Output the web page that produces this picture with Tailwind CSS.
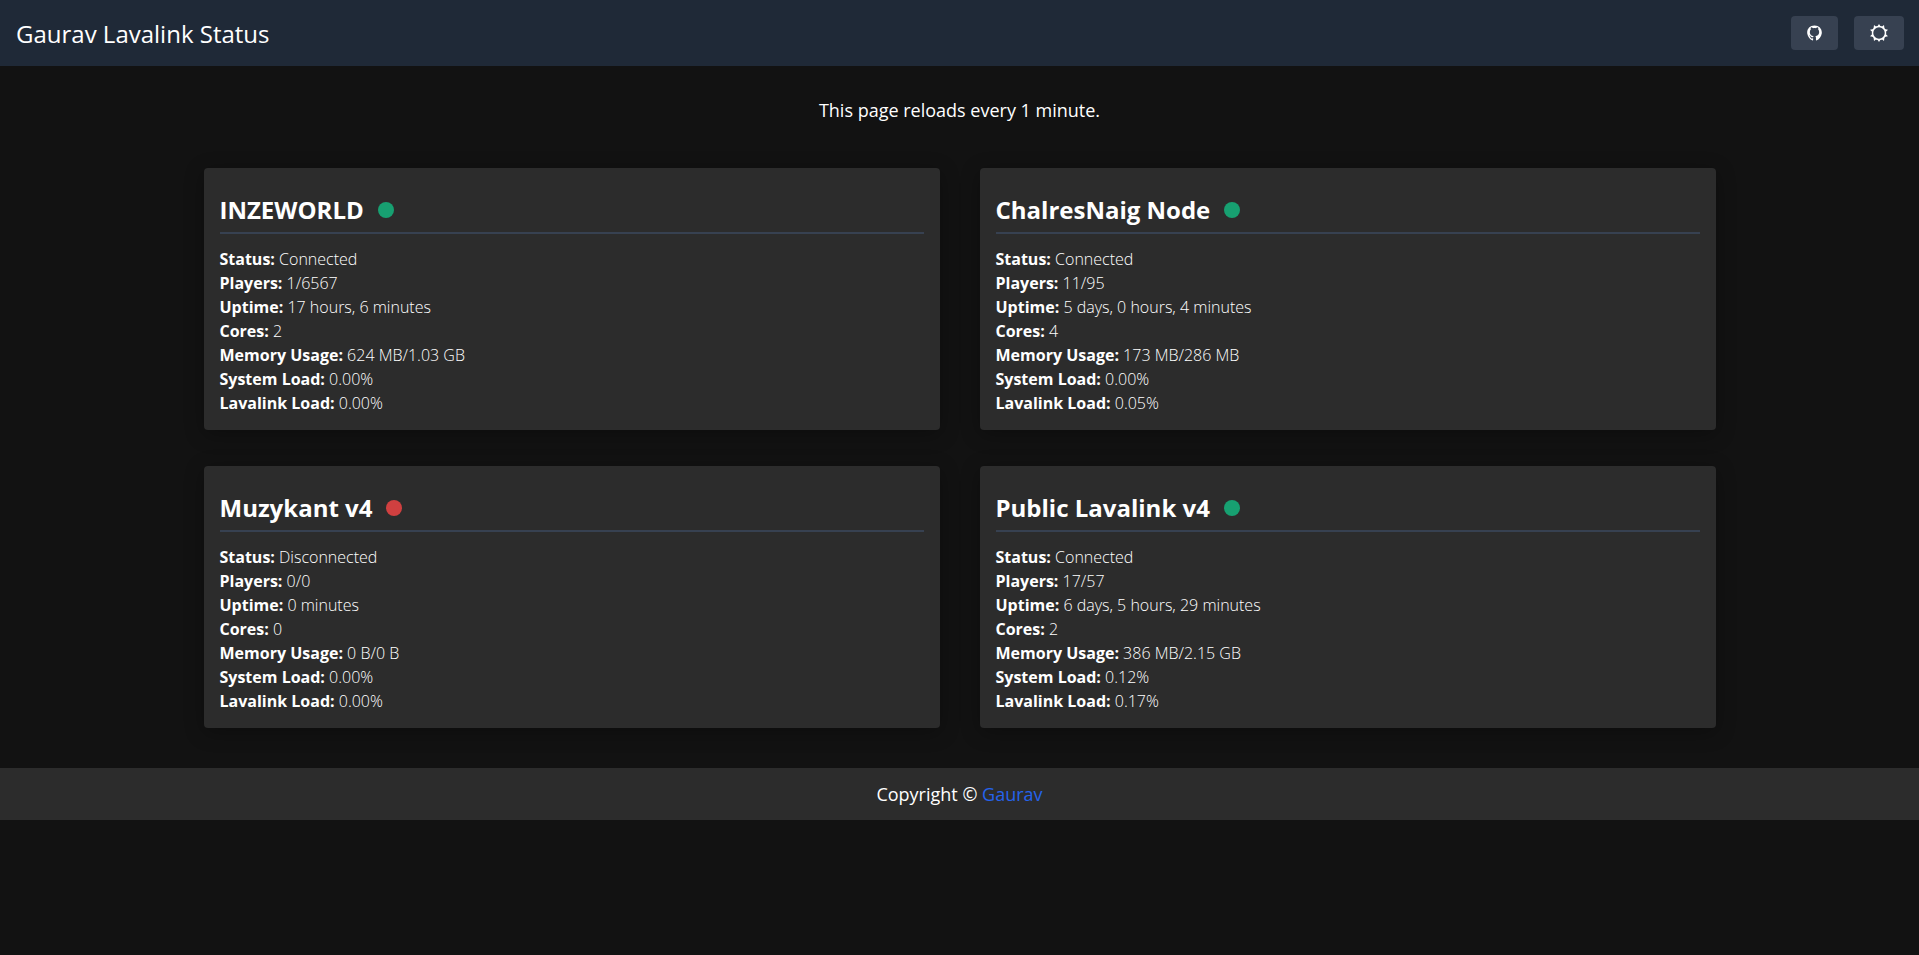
<!DOCTYPE html>
<html lang="en">
<head>
<meta charset="utf-8">
<meta name="viewport" content="width=device-width, initial-scale=1">
<title>Gaurav Lavalink Status</title>
<script src="https://cdn.jsdelivr.net/npm/@tailwindcss/browser@4"></script>
</head>
<body class="min-h-screen bg-[#121212] font-['Open_Sans','Noto_Sans',sans-serif] text-white">
<header class="flex items-center justify-between bg-[#1f2937] py-4 pl-4 pr-[15px]">
  <h1 class="pt-0.5 text-2xl font-medium">Gaurav Lavalink Status</h1>
  <div class="flex gap-4">
    <button type="button" aria-label="GitHub" class="flex h-[34px] items-center rounded bg-[#374151] px-4">
      <svg class="h-4 w-[15px]" viewBox="0 0 496 512" preserveAspectRatio="none" fill="currentColor" aria-hidden="true"><path d="M186 492C92 462 24 374 8 270C-10 140 84 14 248 14s258 126 240 256c-16 104-84 192-178 222c-10 3-14-3-14-10v-76c0-28-8-46-20-56c66-8 126-34 126-130c0-32-12-58-32-78c4-12 10-36-4-66c-30-8-72 28-72 28c-30-8-62-8-92 0c0 0-42-36-72-28c-14 30-8 54-4 66c-20 20-32 46-32 78c0 96 60 122 126 130c-10 8-16 20-18 38c-20 10-58 10-80-28c-10-18-26-22-36-22c-18 0-8 10 0 16c12 8 22 28 28 42c8 20 40 40 88 30v56c0 7-6 13-16 10z"/></svg>
    </button>
    <button type="button" aria-label="Toggle theme" class="flex h-[34px] items-center rounded bg-[#374151] px-4">
      <svg class="size-[18px]" viewBox="0 0 18 18" aria-hidden="true"><circle cx="9" cy="9" r="6.500" fill="none" stroke="currentColor" stroke-width="1.500"/><path fill="currentColor" d="M7 3 9 0l2 3zM7 15l2 3 2-3zM11.500 3l2.500-2 .5 4zM6.500 3 4 1l-.5 4zM11.500 15l2.500 2 .5-4zM6.500 15 4 17l-.5-4zM14.500 5l3.500.8-2.500 2.400zM3.500 5 0 5.800l2.500 2.400zM14.500 13l3.500-.8-2.500-2.400zM3.500 13 0 12.200l2.500-2.400z"/></svg>
    </button>
  </div>
</header>
<main>
  <p class="pt-[30px] text-center text-lg font-medium">This page reloads every 1 minute.</p>
  <div id="nodes" class="mx-auto mt-11 grid max-w-[1536px] grid-cols-1 gap-x-10 gap-y-9 px-3 lg:grid-cols-2"></div>
</main>
<footer class="mt-10 bg-[#2c2c2c] py-3 text-center text-lg font-medium">Copyright © <a href="#" class="text-[#2563eb]">Gaurav</a></footer>
<script>
const labels = ["Status", "Players", "Uptime", "Cores", "Memory Usage", "System Load", "Lavalink Load"];
const nodes = [
  ["INZEWORLD", "Connected", "1/6567", "17 hours, 6 minutes", "2", "624 MB/1.03 GB", "0.00%", "0.00%"],
  ["ChalresNaig Node", "Connected", "11/95", "5 days, 0 hours, 4 minutes", "4", "173 MB/286 MB", "0.00%", "0.05%"],
  ["Muzykant v4", "Disconnected", "0/0", "0 minutes", "0", "0 B/0 B", "0.00%", "0.00%"],
  ["Public Lavalink v4", "Connected", "17/57", "6 days, 5 hours, 29 minutes", "2", "386 MB/2.15 GB", "0.12%", "0.17%"],
];
document.getElementById("nodes").innerHTML = nodes.map(([name, ...values]) => `
  <section class="rounded bg-[#2c2c2c] px-4 pb-[15px] pt-4 shadow-[0_4px_20px_rgba(0,0,0,0.3)]">
    <h2 class="mt-2.5 flex items-center gap-3.5 border-b-2 border-[#374151] pb-1.5 text-2xl font-bold">${name}
      <span class="size-4 rounded-full ${values[0] === "Connected" ? "bg-[#17a071]" : "bg-[#d04040]"}"></span></h2>
    <div class="mt-[13px] text-base font-light">${labels.map((l, i) => `<p><strong class="font-bold">${l}:</strong> ${values[i]}</p>`).join("")}</div>
  </section>`).join("");
</script>
</body>
</html>
